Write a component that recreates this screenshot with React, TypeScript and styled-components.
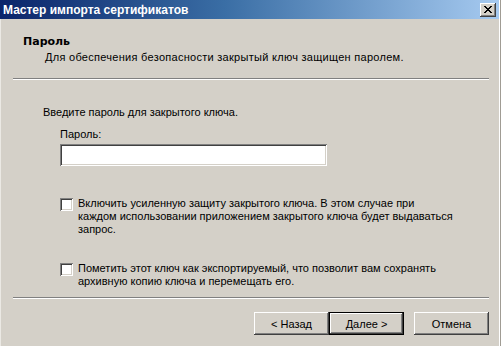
import styled, { createGlobalStyle, css } from "styled-components";

const GlobalStyle = createGlobalStyle`
  html, body {
    margin: 0;
    padding: 0;
    background: #d4d0c8;
  }
  body {
    font-family: "Liberation Sans", Arial, sans-serif;
    font-size: 11px;
    color: #000;
  }
`;

const raised = css`
  background: #d4d0c8;
  box-shadow:
    inset -1px -1px #404040,
    inset 1px 1px #ffffff,
    inset -2px -2px #808080,
    inset 2px 2px #d4d0c8;
`;

const sunken = css`
  background: #ffffff;
  box-shadow:
    inset 1px 1px #808080,
    inset -1px -1px #ffffff,
    inset 2px 2px #404040,
    inset -2px -2px #d4d0c8;
`;

const Window = styled.div`
  width: 501px;
  height: 346px;
  box-sizing: border-box;
  display: flex;
  flex-direction: column;
  background: #d4d0c8;
  box-shadow: inset 1px 0 #ebe9e4, inset -1px 0 #a09c94, inset -2px 0 #ffffff;
`;

const TitleBar = styled.div`
  height: 19px;
  margin-right: 2px;
  padding: 0 3px 0 3px;
  display: flex;
  align-items: center;
  justify-content: space-between;
  background: linear-gradient(to right, #0a246a 0%, #3a6ea5 45%, #a6caf0 100%);
  color: #fff;
  font-weight: bold;
  font-size: 12px;
`;

const CloseButton = styled.div`
  ${raised}
  width: 16px;
  height: 14px;
  display: flex;
  align-items: center;
  justify-content: center;
  svg {
    display: block;
  }
`;

const Header = styled.div`
  padding: 16px 0 0 23px;
  line-height: 13px;
`;

const HeaderTitle = styled.div`
  font-family: "DejaVu Sans", Verdana, sans-serif;
  font-weight: bold;
  font-size: 11px;
  line-height: 13px;
`;

const HeaderText = styled.div`
  margin: 3px 0 0 22px;
  letter-spacing: 0.28px;
`;

const Separator = styled.div<{ $top: number }>`
  margin: ${({ $top }) => $top}px 12px 0 13px;
  border-top: 1px solid #808080;
  border-bottom: 1px solid #ffffff;
`;

const Body = styled.div`
  display: flex;
  flex-direction: column;
  line-height: 13px;
`;

const Intro = styled.div`
  margin: 26px 0 0 43px;
`;

const Field = styled.div`
  margin: 9px 0 0 60px;
  display: flex;
  flex-direction: column;
  gap: 3px;
`;

const PasswordInput = styled.div`
  ${sunken}
  width: 267px;
  height: 22px;
`;

const CheckRow = styled.div<{ $top: number }>`
  margin: ${({ $top }) => $top}px 0 0 60px;
  display: flex;
  gap: 5px;
  white-space: nowrap;
`;

const CheckBox = styled.div`
  ${sunken}
  flex: none;
  width: 13px;
  height: 13px;
  margin-top: 1px;
`;

const Footer = styled.div`
  margin-top: auto;
  padding-bottom: 11px;
`;

const ButtonRow = styled.div`
  display: flex;
  justify-content: flex-end;
  padding: 13px 12px 0 0;
`;

const Button = styled.div<{ $default?: boolean; $gap?: number }>`
  width: 75px;
  height: 23px;
  box-sizing: border-box;
  display: flex;
  align-items: center;
  justify-content: center;
  margin-left: ${({ $gap }) => $gap || 0}px;
  ${raised}
  ${({ $default }) =>
    $default &&
    css`
      box-shadow:
        inset 0 0 0 1px #000000,
        inset -2px -2px #404040,
        inset 2px 2px #ffffff,
        inset -3px -3px #808080;
    `}
`;

export default function App() {
  return (
    <>
      <GlobalStyle />
      <Window>
        <TitleBar>
          <span>Мастер импорта сертификатов</span>
          <CloseButton>
            <svg width="8" height="7" viewBox="0 0 8 7">
              <path d="M0 0h2v1h1v1h2V1h1V0h2v1H7v1H6v1H5v1h1v1h1v1h1v1H6V6H5V5H3v1H2v1H0V6h1V5h1V4h1V3H2V2H1V1H0z" fill="#000" />
            </svg>
          </CloseButton>
        </TitleBar>

        <Header>
          <HeaderTitle>Пароль</HeaderTitle>
          <HeaderText>Для обеспечения безопасности закрытый ключ защищен паролем.</HeaderText>
        </Header>
        <Separator $top={14} />

        <Body>
          <Intro>Введите пароль для закрытого ключа.</Intro>
          <Field>
            <span>Пароль:</span>
            <PasswordInput />
          </Field>
          <CheckRow $top={31}>
            <CheckBox />
            <div>
              Включить усиленную защиту закрытого ключа. В этом случае при
              <br />
              каждом использовании приложением закрытого ключа будет выдаваться
              <br />
              запрос.
            </div>
          </CheckRow>
          <CheckRow $top={26}>
            <CheckBox />
            <div>
              Пометить этот ключ как экспортируемый, что позволит вам сохранять
              <br />
              архивную копию ключа и перемещать его.
            </div>
          </CheckRow>
        </Body>

        <Footer>
          <Separator $top={0} />
          <ButtonRow>
            <Button>&lt; Назад</Button>
            <Button $default>Далее &gt;</Button>
            <Button $gap={10}>Отмена</Button>
          </ButtonRow>
        </Footer>
      </Window>
    </>
  );
}
